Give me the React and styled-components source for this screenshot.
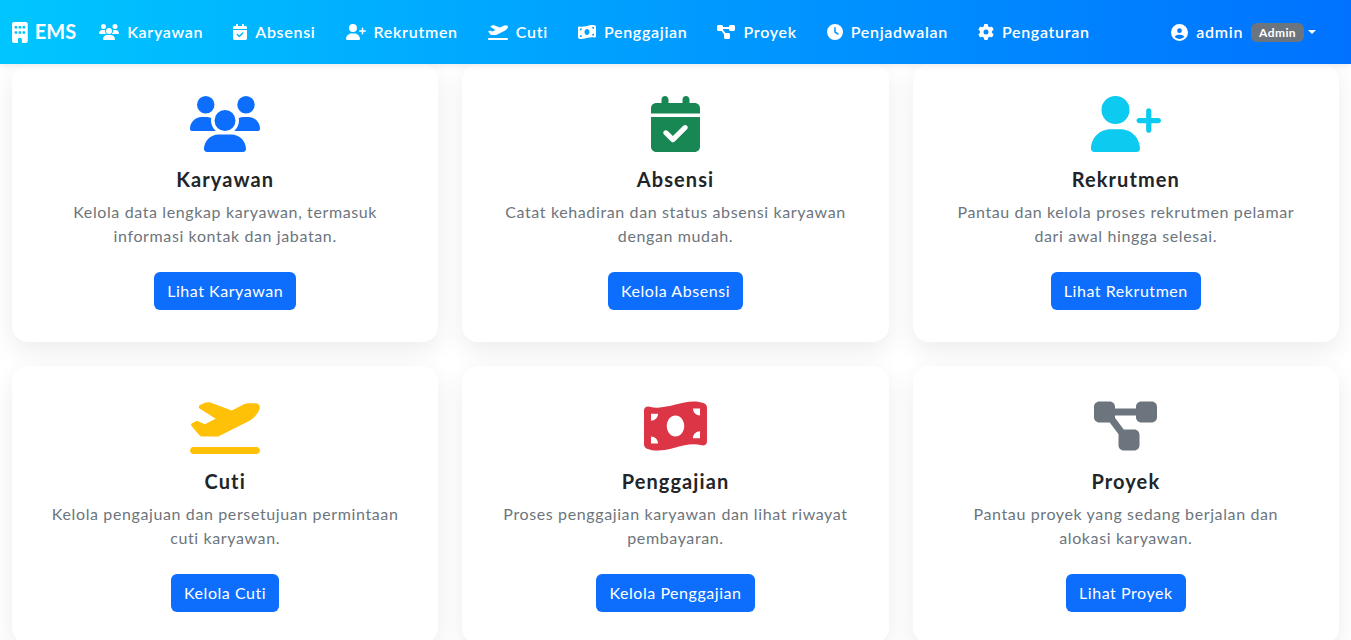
import styled, { createGlobalStyle } from "styled-components"
import {
    FaBuilding, FaUsers, FaCalendarCheck, FaUserPlus, FaPlaneDeparture,
    FaMoneyBillWave, FaDiagramProject, FaClock, FaGear, FaCircleUser,
} from "react-icons/fa6"

const GlobalStyle = createGlobalStyle`
    html, body {
        margin: 0;
        height: 100%;
        overflow: hidden;
    }
    body {
        background: #fff;
        font-family: "Lato", "Open Sans", sans-serif;
        color: #212529;
    }
`

// react-icons draws a square box, so the real width of each glyph is set here
const Glyph = styled.span`
    display: inline-flex;
    font-size: ${(p) => p.$size}px;
    color: ${(p) => p.$color || "inherit"};
    svg {
        width: ${(p) => p.$ratio || 1}em;
        height: 1em;
    }
`

const Navbar = styled.nav`
    height: 64px;
    box-sizing: border-box;
    padding: 0 12px;
    display: flex;
    align-items: center;
    background: linear-gradient(90deg, #00c6ff, #0072ff);
    box-shadow: 0 2px 6px rgba(0, 0, 0, 0.08);
    color: #fff;
    position: relative;
    z-index: 2;
`

const Brand = styled.a`
    display: flex;
    align-items: center;
    gap: 7px;
    font-size: 20px;
    font-weight: 700;
    margin-right: 8px;
`

const NavLink = styled.a`
    display: flex;
    align-items: center;
    gap: 8px;
    padding: 0 15px;
    font-size: 16px;
    font-weight: 600;
    letter-spacing: 0.7px;
    white-space: nowrap;
`

const NavLabel = styled.span`
    margin-bottom: 2px;
`

const UserMenu = styled.div`
    margin-left: auto;
    margin-right: 23px;
    display: flex;
    align-items: center;
    gap: 8px;
    font-size: 16px;
    font-weight: 600;
    letter-spacing: 0.7px;
`

const RoleBadge = styled.span`
    padding: 3px 8px;
    border-radius: 6px;
    background: #6c757d;
    font-size: 12px;
    font-weight: 700;
    letter-spacing: 0.4px;
    line-height: 13px;
`

const Caret = styled.span`
    margin-left: -4px;
    border-top: 4.8px solid #fff;
    border-left: 4.8px solid transparent;
    border-right: 4.8px solid transparent;
`

const CardGrid = styled.main`
    display: grid;
    grid-template-columns: repeat(3, 1fr);
    gap: 24px;
    padding: 0 12px;
`

const Card = styled.section`
    padding: 32px;
    border-radius: 16px;
    background: #fff;
    box-shadow: 0 8px 24px rgba(0, 0, 0, 0.08);
    text-align: center;
`

const CardIcon = styled.div`
    height: 56px;
    display: flex;
    justify-content: center;
`

const CardTitle = styled.h5`
    margin: 16px 0 10px;
    font-size: 20px;
    line-height: 22px;
    font-weight: 700;
    letter-spacing: 1.1px;
    color: #212529;
`

const CardText = styled.p`
    margin: 0 0 24px;
    font-size: 16px;
    line-height: 24px;
    letter-spacing: 0.62px;
    color: #6c757d;
`

const CardButton = styled.a`
    display: inline-block;
    padding: 7px 13px;
    border-radius: 6px;
    background: #0d6efd;
    color: #fff;
    font-size: 16px;
    line-height: 24px;
    letter-spacing: 0.55px;
`

const navItems = [
    { label: "Karyawan", icon: FaUsers, ratio: 1.25 },
    { label: "Absensi", icon: FaCalendarCheck, ratio: 0.875 },
    { label: "Rekrutmen", icon: FaUserPlus, ratio: 1.25 },
    { label: "Cuti", icon: FaPlaneDeparture, ratio: 1.25 },
    { label: "Penggajian", icon: FaMoneyBillWave, ratio: 1.125 },
    { label: "Proyek", icon: FaDiagramProject, ratio: 1.125 },
    { label: "Penjadwalan", icon: FaClock, ratio: 1 },
    { label: "Pengaturan", icon: FaGear, ratio: 1 },
]

const cards = [
    { title: "Karyawan", icon: FaUsers, ratio: 1.25, color: "#0d6efd", lines: ["Kelola data lengkap karyawan, termasuk", "informasi kontak dan jabatan."], action: "Lihat Karyawan" },
    { title: "Absensi", icon: FaCalendarCheck, ratio: 0.875, color: "#198754", lines: ["Catat kehadiran dan status absensi karyawan", "dengan mudah."], action: "Kelola Absensi" },
    { title: "Rekrutmen", icon: FaUserPlus, ratio: 1.25, color: "#0dcaf0", lines: ["Pantau dan kelola proses rekrutmen pelamar", "dari awal hingga selesai."], action: "Lihat Rekrutmen" },
    { title: "Cuti", icon: FaPlaneDeparture, ratio: 1.25, color: "#ffc107", lines: ["Kelola pengajuan dan persetujuan permintaan", "cuti karyawan."], action: "Kelola Cuti" },
    { title: "Penggajian", icon: FaMoneyBillWave, ratio: 1.125, color: "#dc3545", lines: ["Proses penggajian karyawan dan lihat riwayat", "pembayaran."], action: "Kelola Penggajian" },
    { title: "Proyek", icon: FaDiagramProject, ratio: 1.125, color: "#6c757d", lines: ["Pantau proyek yang sedang berjalan dan", "alokasi karyawan."], action: "Lihat Proyek" },
]

export default function App() {
    return (
        <>
            <GlobalStyle />
            <Navbar>
                <Brand><Glyph $size={21} $ratio={0.75}><FaBuilding /></Glyph><NavLabel>EMS</NavLabel></Brand>
                {navItems.map(({ label, icon: Icon, ratio }) => (
                    <NavLink key={label}><Glyph $size={16} $ratio={ratio}><Icon /></Glyph><NavLabel>{label}</NavLabel></NavLink>
                ))}
                <UserMenu>
                    <Glyph $size={17}><FaCircleUser /></Glyph>
                    <NavLabel>admin</NavLabel>
                    <RoleBadge>Admin</RoleBadge>
                    <Caret />
                </UserMenu>
            </Navbar>
            <CardGrid>
                {cards.map(({ title, icon: Icon, ratio, color, lines, action }) => (
                    <Card key={title}>
                        <CardIcon><Glyph $size={56} $ratio={ratio} $color={color}><Icon /></Glyph></CardIcon>
                        <CardTitle>{title}</CardTitle>
                        <CardText>{lines[0]}<br />{lines[1]}</CardText>
                        <CardButton>{action}</CardButton>
                    </Card>
                ))}
            </CardGrid>
        </>
    )
}
